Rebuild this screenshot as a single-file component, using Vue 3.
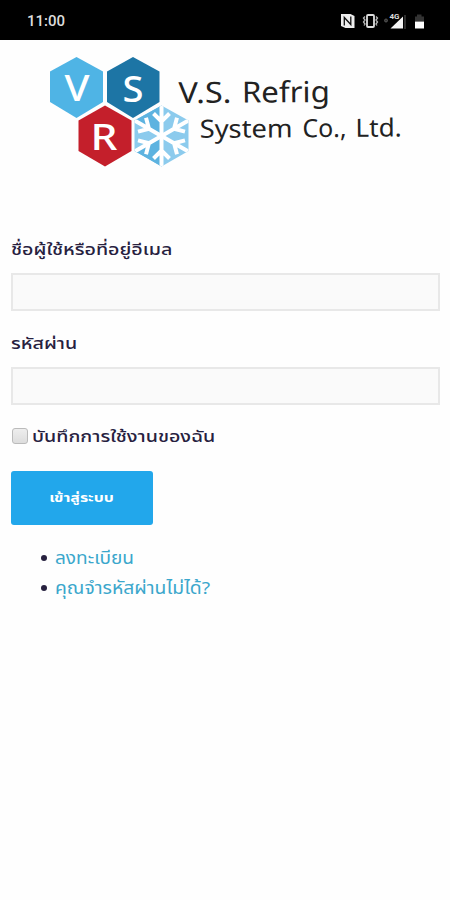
<script setup>
import { ref } from 'vue'

const username = ref('')
const password = ref('')
const remember = ref(false)
const arms = [0, 60, 120, 180, 240, 300]
const links = [
  { text: 'ลงทะเบียน', width: 'short' },
  { text: 'คุณจำรหัสผ่านไม่ได้?', width: 'long' },
]
</script>

<template>
  <main class="screen">
    <header class="status">
      <span class="time">11:00</span>
      <svg class="status-icons" width="90" height="20" viewBox="0 0 90 20" fill="none">
        <path d="M3 3H12.500l4 2v12H7.500L3 15V3z" fill="#eee" />
        <path d="M6.300 14.500V6.500L12.800 13.500V5.500" stroke="#111" stroke-width="1.300" />
        <rect x="29" y="4" width="7" height="12" rx="1" stroke="#ddd" stroke-width="1.800" />
        <path d="M27 5.500l-1.500 1.500 1.500 2-1.500 2 1.500 2-1 1.500M38 5.500l1.500 1.500-1.500 2 1.500 2-1.500 2 1 1.500" stroke="#bbb" stroke-width="1.300" />
        <circle cx="48" cy="9.500" r="1.500" fill="#333" stroke="#555" />
        <path d="M52.500 17.500L65 5.500V17.500z" fill="#f4f4f4" />
        <path d="M67 4V18" stroke="#444" stroke-width="1.300" />
        <text x="51.500" y="8" class="network">4G</text>
        <path d="M79 3.500h4.500v2h2.500V10h-9V5.500h2z" fill="#333" />
        <path d="M77 10.500h9v7h-9z" fill="#fff" />
      </svg>
    </header>

    <svg class="logo" width="370" height="125" viewBox="40 48 370 125" role="img" aria-label="V.S. Refrig System Co., Ltd.">
      <defs>
        <clipPath id="flake"><path d="M161.500 105.500L188.500 120.500V151L161.500 166.500L134.500 151V120.500Z" /></clipPath>
      </defs>
      <path d="M76.500 57L103 71.500V102L76.500 118L50 102V71.500Z" fill="#4fb4e5" />
      <path d="M133 57L159.500 71.500V102L133 118L107 102V71.500Z" fill="#1d75a5" />
      <path d="M105 105.500L131.500 120.500V151L105 166.500L78.500 151V120.500Z" fill="#c41f2b" />
      <g clip-path="url(#flake)">
        <path d="M134 105h55v62h-55z" fill="#8ccbed" />
        <path d="M161.500 136V105L134 120ZM161.500 136L134 151L161.500 167Z" fill="#5db3e0" />
        <path
          v-for="angle in arms"
          :key="angle"
          :transform="`rotate(${angle} 161.5 136)`"
          class="arm"
          d="M161.500 136V105M153.500 113.500L161.500 121.500L169.500 113.500"
        />
      </g>
      <g class="initials">
        <text x="64.500" y="101" textLength="25" lengthAdjust="spacingAndGlyphs">V</text>
        <text x="122.500" y="101.500" textLength="21" lengthAdjust="spacingAndGlyphs">S</text>
        <text x="90.500" y="149.500" textLength="27" lengthAdjust="spacingAndGlyphs">R</text>
      </g>
      <g class="company" transform="rotate(-.4 179 120)">
        <text x="178.500" y="103" font-size="29" textLength="53" lengthAdjust="spacingAndGlyphs">V.S.</text>
        <text x="242" y="103" font-size="29" textLength="88" lengthAdjust="spacingAndGlyphs">Refrig</text>
        <text x="199.500" y="138" font-size="25" textLength="93" lengthAdjust="spacingAndGlyphs">System</text>
        <text x="302.500" y="138" font-size="25" textLength="44" lengthAdjust="spacingAndGlyphs">Co.,</text>
        <text x="355.500" y="138" font-size="25" textLength="46" lengthAdjust="spacingAndGlyphs">Ltd.</text>
      </g>
    </svg>

    <form class="login" @submit.prevent>
      <label class="label" for="user"><span class="wide">ชื่อผู้ใช้หรือที่อยู่อีเมล</span></label>
      <input id="user" v-model="username" class="field" type="text" />
      <label class="label" for="pass"><span class="wide">รหัสผ่าน</span></label>
      <input id="pass" v-model="password" class="field" type="password" />
      <label class="remember">
        <input v-model="remember" class="check" type="checkbox" />
        <span class="wide">บันทึกการใช้งานของฉัน</span>
      </label>
      <button class="submit"><span>เข้าสู่ระบบ</span></button>
    </form>
    <ul class="links">
      <li v-for="link in links" :key="link.text"><a href="#" :class="link.width">{{ link.text }}</a></li>
    </ul>
  </main>
</template>

<style>
body { background: #fefefe; }
</style>

<style scoped>
.screen { min-height: 900px; background: #fefefe; color: #27213f; font-family: "Noto Sans", "Noto Sans Thai", "Liberation Sans", sans-serif; }
.status { display: flex; align-items: center; justify-content: space-between; height: 40px; box-sizing: border-box; padding: 2px 22px 0 27px; background: #000; color: #ddd; }
.time { font: 500 15px Roboto, sans-serif; }
.network { font: 700 8px Roboto, sans-serif; fill: #ddd; }
.logo { display: block; margin: 8px 0 0 40px; }
.arm { fill: none; stroke: #fff; stroke-width: 4; }
.initials { font: 500 37px "Noto Sans", sans-serif; fill: #fff; }
.company { font-family: "Noto Sans", sans-serif; fill: #222; }
.login { display: flex; flex-direction: column; align-items: flex-start; padding: 60px 10px 0 11px; }
.label { height: 40px; line-height: 32px; font-size: 16px; font-weight: 500; white-space: nowrap; }
.wide { display: inline-block; transform: scaleX(1.227); transform-origin: left; }
.field { box-sizing: border-box; width: 100%; height: 38px; margin: 0 0 16px; border: 2px solid #e8e8e8; background: #fafafa; outline: 0; }
.remember { display: flex; align-items: center; gap: 4px; height: 32px; font-size: 16px; font-weight: 500; white-space: nowrap; }
.check { appearance: none; box-sizing: border-box; width: 16px; height: 16px; margin: 0 0 2px 1px; border: 1px solid #bbb; border-radius: 3px; background: linear-gradient(#eee, #ddd); }
.submit { width: 142px; height: 54px; margin-top: 18px; padding: 0; border: 0; border-radius: 3px; background: #22a7eb; color: #fff; font: 700 13px "Noto Sans", "Noto Sans Thai", sans-serif; }
.submit span { display: inline-block; transform: scaleX(1.22); }
.links { margin: 18px 0 0; padding: 0 0 0 55px; font-size: 17px; line-height: 30px; list-style: none; }
.links li { display: flex; align-items: center; }
.links li::before { content: ""; width: 6px; height: 6px; margin: 0 8px 0 -14px; border-radius: 50%; background: #27213f; }
.links a { display: inline-block; color: #3ba7cc; text-decoration: none; transform-origin: left; }
.links .short { transform: scaleX(1.12); }
.links .long { transform: scaleX(1.135); }
</style>
